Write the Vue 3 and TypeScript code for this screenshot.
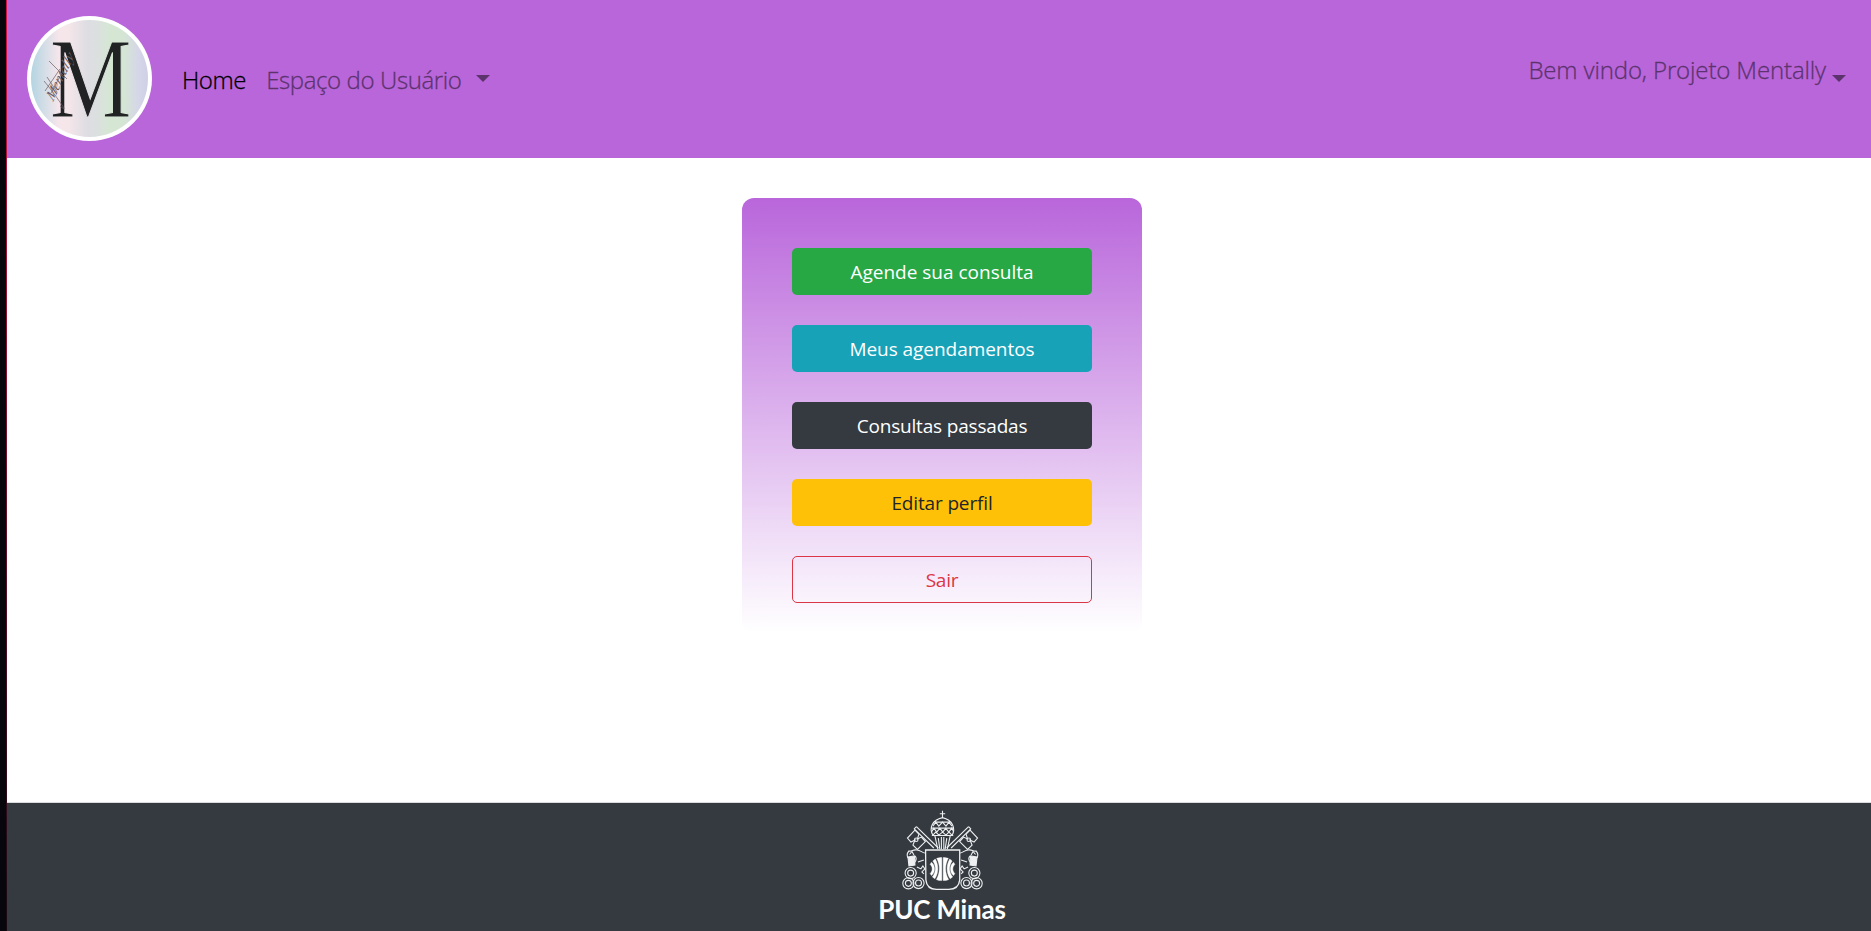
<script setup lang="ts">
interface Action { label: string; kind: string }

const actions: Action[] = [
  { label: 'Agende sua consulta', kind: 'success' },
  { label: 'Meus agendamentos', kind: 'info' },
  { label: 'Consultas passadas', kind: 'dark' },
  { label: 'Editar perfil', kind: 'warning' },
  { label: 'Sair', kind: 'outline' },
]
const sides = ['', 'translate(85.4 0) scale(-1 1)']
</script>

<template>
  <div class="page">
    <div class="edge"></div>
    <div class="content">
      <nav class="navbar">
        <svg class="brand" viewBox="0 0 125 125" aria-label="Mentally">
          <defs>
            <linearGradient id="pastel" x1="0" x2="1" y1="0" y2="0">
              <stop offset="0" stop-color="#b3d5e2" />
              <stop offset=".24" stop-color="#f6e6eb" />
              <stop offset=".32" stop-color="#f5e6ea" />
              <stop offset=".48" stop-color="#dddde2" />
              <stop offset=".55" stop-color="#dcdfe0" />
              <stop offset=".68" stop-color="#d5e7d3" />
              <stop offset=".8" stop-color="#d5e5d5" />
              <stop offset=".93" stop-color="#d5d5e9" />
              <stop offset="1" stop-color="#cfcfe6" />
            </linearGradient>
            <linearGradient id="trim" href="#pastel" gradientUnits="userSpaceOnUse" x1="-23" x2="123" y1="0" y2="0" />
          </defs>
          <circle cx="62.5" cy="62.5" r="62.5" fill="#fff" />
          <circle cx="62.5" cy="62.5" r="58.5" fill="url(#pastel)" />
          <text class="initial" transform="translate(22.8 101) scale(.8 1)">M</text>
          <g class="signature">
            <text transform="translate(26 86) rotate(-65) skewX(-20)">Mentally</text>
            <path d="M17 65C23 72 31 83 37 92V93L33 90M22 45 40 63M18 75 33 53M24 77 36 55M20 61 30 76" />
          </g>
        </svg>
        <a class="link home">Home</a>
        <a class="link space">Espaço do Usuário</a>
        <i class="caret"></i>
        <div class="user"><a class="link welcome">Bem vindo, Projeto Mentally</a><i class="caret low"></i></div>
      </nav>

      <main>
        <section class="card">
          <button v-for="a in actions" :key="a.label" class="btn" :class="a.kind">{{ a.label }}</button>
        </section>
      </main>

      <footer>
        <svg class="crest" viewBox="0 5 85.4 82" fill="none" stroke="#eeeff0" stroke-width="1.1">
          <path d="M42.700 5.500V13M40 8.500H45.400M33 30C29 23 32 15 42.700 12.500 53 15 56 23 52.500 30M35 17H50.500M31.500 23H54M32 30.500H53.500M35 30.500 38 44M50.500 30.500 47.500 44M38.500 33 40 44M41.600 32V44M44 32V44M47 33 45.400 44" />
          <path d="m31.500 27 2.500-4 3 4 3-4 3 4 3-4 3 4 3-4 2 4M33 21l3-4 3 4 3.700-4 3.500 4 3-4 3 4M33 30l3-3 3 3 3.700-3 3.500 3 3-3 3 3" />
          <g v-for="(t, i) in sides" :key="i" :transform="t">
            <path d="M16.500 21.500 38.500 43M14.500 24 34 43M16.500 21.500 14 24" />
            <path d="M15 25 7.500 33 11 37 15 35 13 40 17.500 44.500 25.500 36.500 21.500 32 17.500 34 19 29Z" />
            <circle cx="16.300" cy="34.700" r="1.800" />
            <path d="M25 48C22 48 21 45 17 45 13 44 12 47 9 46 7 48 7 51 8 53M15 51C18 54 15 58 12 60M18 57 24 55M17 62 21 64 23 61 25 64 22 67 24 69" />
            <path d="M8 52 14.500 51 15 60 9 61Z" fill="#eeeff0" />
            <path d="M9.500 49.500 12 46.500 14 50" />
            <circle cx="10.700" cy="68.200" r="5.600" /><circle cx="10.700" cy="68.200" r="3" />
            <circle cx="8.400" cy="78.500" r="5.600" /><circle cx="8.400" cy="78.500" r="3" />
            <circle cx="18.600" cy="78.200" r="5.600" /><circle cx="18.600" cy="78.200" r="3" />
          </g>
          <path d="M25.700 45H60V75Q59 84.500 49 84.500H36.500Q27 84.500 26 75Z" stroke-width="1.300" />
          <g v-for="(t, i) in sides" :key="'globe' + i" :transform="t" fill="#fff" stroke="#fff" stroke-width=".4">
            <path d="M40.500 52.600H42V75.700H40.500C39 75.700 37.500 75.200 36.500 74.700 40.500 68 40.500 60 36.800 53.400Z" />
            <path d="M35.400 54C39 60 39 68 35 74L32.500 72C36.500 67 36.500 61 33 56Z" />
            <path d="M31.500 57.300C35.700 60 35.700 68 31.500 70.700L30.300 68.500C33 66 33 62 30.300 59.500Z" />
          </g>
        </svg>
        <span class="puc">PUC Minas</span>
      </footer>
    </div>
  </div>
</template>

<style>
body { margin: 0; overflow: hidden; }
</style>
<style scoped>
* { box-sizing: border-box; }
.page { display: flex; height: 931px; font-family: "Open Sans", "Noto Sans", sans-serif; background: #fff; }
.edge { width: 7px; background: #07060c; border-right: 1px solid; border-image: linear-gradient(#d51245, #b01038 18%, #3a0b1c 80%, #160910) 1; }
.content { flex: 1; display: flex; flex-direction: column; }
.navbar { height: 158px; background: #b966db; display: flex; align-items: center; padding: 0 25px 2px 20px; }
.brand { width: 125px; height: 125px; overflow: visible; }
.initial { font: 115px "Liberation Serif", serif; fill: #202223; stroke: url(#trim); stroke-width: 1.2px; }
.signature { font: italic 14px "Liberation Serif", serif; fill: #6a5c62; }
.signature path { fill: none; stroke: #6a5c62; stroke-width: .7px; }
.link { font-size: 24px; line-height: 36px; font-weight: 300; white-space: nowrap; color: #5d336e; -webkit-text-stroke: .3px currentColor; }
.home { margin: 3px 0 0 30px; color: #000; letter-spacing: -.4px; }
.space { margin: 3px 0 0 20px; letter-spacing: -.38px; }
.welcome { letter-spacing: -.13px; }
.caret { border: 7px solid transparent; border-top-color: #5d336e; border-bottom: 0; margin: 1px 0 0 14px; }
.user { margin: -16px 0 0 auto; display: flex; align-items: center; }
.low { margin: 16px 0 0 6px; }
main { flex: 1; padding: 40px 0 0 6px; }
.card { width: 400px; height: 435px; margin: 0 auto; padding: 50px; border-radius: 12px; background: linear-gradient(#b966db, #fff); display: flex; flex-direction: column; gap: 30px; }
.btn { height: 47px; flex: none; border: 1px solid transparent; border-radius: 5px; color: #fff; font: 400 19px/30px "Open Sans", "Noto Sans", sans-serif; padding: 0; }
.success { background: #28a745; }
.info { background: #17a2b8; letter-spacing: -.05px; }
.dark { background: #343a40; letter-spacing: -.18px; }
.warning { background: #ffc107; color: #212529; letter-spacing: -.15px; }
.outline { background: transparent; border-color: #dc3545; color: #dc3545; letter-spacing: -.2px; }
footer { height: 129px; background: #343a40; border-top: 1px solid #d8dadc; display: flex; flex-direction: column; align-items: center; padding: 7px 0 0 6px; }
.crest { width: 85px; height: 82px; flex: none; }
.puc { color: #fff; font: 700 26px/34px "Lato", sans-serif; letter-spacing: -.2px; }
</style>
